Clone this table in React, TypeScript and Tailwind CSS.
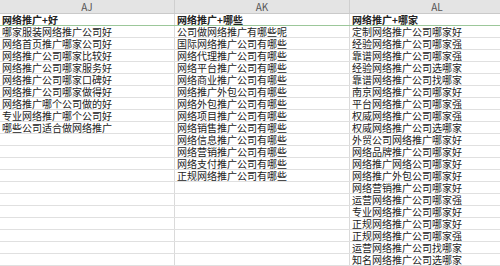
const colAJ = [
  '哪家服装网络推广公司好',
  '网络首页推广哪家公司好',
  '网络推广公司哪家比较好',
  '网络推广公司哪家服务好',
  '网络推广公司哪家口碑好',
  '网络推广公司哪家做得好',
  '网络推广哪个公司做的好',
  '专业网络推广哪个公司好',
  '哪些公司适合做网络推广',
];

const colAK = [
  '公司做网络推广有哪些呢',
  '国际网络推广公司有哪些',
  '网络代理推广公司有哪些',
  '网络平台推广公司有哪些',
  '网络商业推广公司有哪些',
  '网络推广外包公司有哪些',
  '网络外包推广公司有哪些',
  '网络项目推广公司有哪些',
  '网络销售推广公司有哪些',
  '网络信息推广公司有哪些',
  '网络营销推广公司有哪些',
  '网络支付推广公司有哪些',
  '正规网络推广公司有哪些',
];

const colAL = [
  '定制网络推广公司哪家好',
  '经验网络推广公司哪家强',
  '靠谱网络推广公司哪家强',
  '经验网络推广公司选哪家',
  '靠谱网络推广公司找哪家',
  '南京网络推广公司哪家好',
  '平台网络推广公司哪家强',
  '权威网络推广公司哪家强',
  '权威网络推广公司选哪家',
  '外贸公司网络推广哪家好',
  '网络品牌推广公司哪家好',
  '网络推广网络公司哪家好',
  '网络推广外包公司哪家好',
  '网络营销推广公司哪家好',
  '运营网络推广公司哪家强',
  '专业网络推广公司哪家好',
  '正规网络推广公司哪家好',
  '正规网络推广公司哪家强',
  '运营网络推广公司找哪家',
  '知名网络推广公司选哪家',
];

const font = { fontFamily: '"Noto Sans CJK SC", "Noto Sans", sans-serif' };

function Cell({ text, bold }: { text?: string; bold?: boolean }) {
  return (
    <div
      className={`w-[175px] shrink-0 border-r border-[#dadada] pl-[2px] whitespace-nowrap text-[10px] leading-[11px] text-[#222] ${bold ? 'font-bold' : ''}`}
    >
      {text}
    </div>
  );
}

export default function App() {
  const rows = Array.from({ length: 20 }, (_, i) => i);
  return (
    <div className="w-[500px] h-[266px] overflow-hidden bg-white" style={font}>
      <div className="flex h-[14px] bg-[#e4e4e4] border-b border-[#cacaca] text-[10px] leading-[13px] text-[#555]">
        {['AJ', 'AK', 'AL'].map((c) => (
          <div key={c} className="w-[175px] shrink-0 text-center border-r border-[#cfcfcf]">
            {c}
          </div>
        ))}
      </div>
      <div className="flex h-[12px] border-b border-[#9cc79a]">
        <Cell text="网络推广+好" bold />
        <Cell text="网络推广+哪些" bold />
        <Cell text="网络推广+哪家" bold />
      </div>
      {rows.map((i) => (
        <div key={i} className="flex h-[12px] border-b border-[#e0e0e0]">
          <Cell text={colAJ[i]} />
          <Cell text={colAK[i]} />
          <Cell text={colAL[i]} />
        </div>
      ))}
    </div>
  );
}
